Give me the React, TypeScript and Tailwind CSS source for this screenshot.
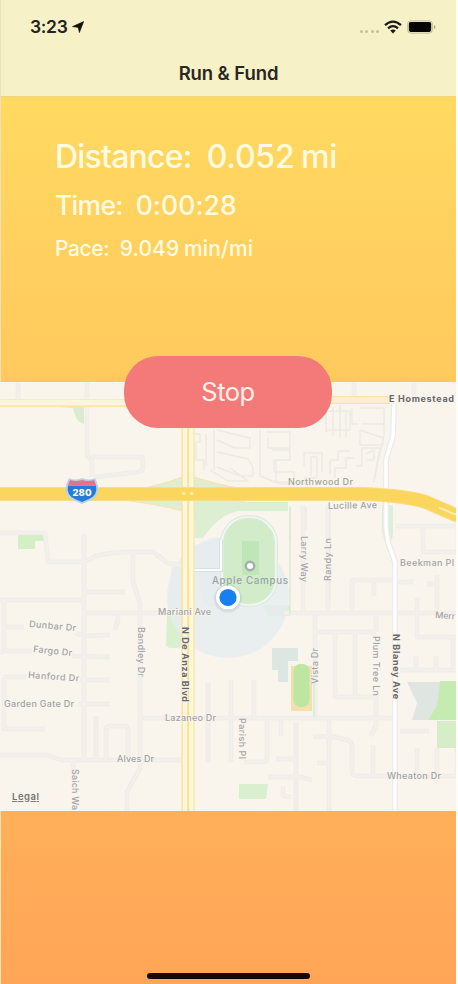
const FONT = "font-['Inter','Liberation_Sans',sans-serif]";

// Residential streets, as centre lines.
const STREETS = [
  "M18 382V400",
  "M87 382V455L92 461V477",
  "M92 457H140Q143 457 143 460V468Q143 471 138 472L95 477",
  "M0 533H45L48 562H84L96 556Q110 552 135 552H153L168 563L182 566",
  "M84 534V757",
  "M0 600H84",
  "M84 592H125",
  "M84 613H182",
  "M118 613V620L115 630",
  "M133 553V582L140 603V768L127 792V811",
  "M4 600V651L0 653",
  "M4 627H24M76 633L84 636L110 635",
  "M4 651H32M72 656L110 657",
  "M4 677V729H45",
  "M4 677H26M80 680H110",
  "M78 704H110",
  "M0 755H48L60 760H182",
  "M73 760V775",
  "M96 716V757",
  "M106 757V730Q106 726 110 726H124Q128 726 128 731V757",
  "M140 718H182",
  "M208 682V762",
  "M194 718H396",
  "M231 680V762",
  "M254 680V718",
  "M267 720V758Q267 762 262 762H244",
  "M281 720V736",
  "M296 722V811",
  "M276 759H296M268 777L300 777L312 780",
  "M283 786V796L291 797",
  "M329 718V811",
  "M313 737L329 736L348 740Q352 742 352 748V772Q353 776 358 776H458",
  "M317 763H329",
  "M373 745V776",
  "M376 690V725L371 736",
  "M303 505V613M328 505V613",
  "M284 613H458",
  "M352 613V580H395",
  "M374 580V596M376 613V632",
  "M315 613V718",
  "M315 632H376",
  "M335 632V697H376",
  "M355 632V697",
  "M396 582H413M427 584H434",
  "M437 575V613",
  "M417 598V637H458",
  "M453 637V667",
  "M400 670H458M416 656V670M436 656V670",
  "M400 731H429",
  "M417 748V776M437 748V776M457 748V776",
  "M396 526H458V552H423V528",
  "M354 382V398M414 382V396",
];

// Small lanes in the dense housing blocks north of the freeway.
const LANES = [
  "M194 434H200V442H196V460H204V470M214 430V470M206 434V465",
  "M217 430L250 438V448H235L217 440M217 452L248 459L253 467V476H240L217 467",
  "M230 468L248 481H228L210 470",
  "M260 430V476L280 484H305M266 432H290V448H268V438",
  "M272 450H290V460H274V472H294V482H276V460",
  "M304 466V453H322V472M311 476V457H317V478H304",
  "M330 474V460H338V451H350M335 478V468H346V458H354",
  "M356 466H362V448H380L374 482M367 460H374V450L366 454",
  "M326 411V432M333 407V436M340 405V438M346 410V438M326 411H350V430H326",
  "M352 407V424H358M360 408H384V424H362M360 430L383 438V445H360V430",
  "M384 410V435L374 480",
  "M290 506V540M306 507V530M330 508V600",
];

const LABELS: { text: string; x: number; y: number; w: number; angle?: number; bold?: boolean }[] = [
  { text: "Northwood Dr", x: 288, y: 485, w: 65 },
  { text: "Lucille Ave", x: 328, y: 509, w: 49, angle: -1 },
  { text: "Beekman Pl", x: 400, y: 566, w: 54 },
  { text: "Mariani Ave", x: 158, y: 615, w: 53 },
  { text: "Dunbar Dr", x: 29, y: 627, w: 47, angle: 5 },
  { text: "Fargo Dr", x: 33, y: 652, w: 39, angle: 6 },
  { text: "Hanford Dr", x: 28, y: 678, w: 51, angle: 4 },
  { text: "Garden Gate Dr", x: 4, y: 707, w: 70 },
  { text: "Lazaneo Dr", x: 165, y: 721, w: 51 },
  { text: "Alves Dr", x: 117, y: 762, w: 37 },
  { text: "Wheaton Dr", x: 387, y: 779, w: 54 },
  { text: "Merr", x: 435, y: 618, w: 20, angle: 4 },
  { text: "Larry Way", x: 301, y: 536, w: 46, angle: 90 },
  { text: "Randy Ln", x: 331, y: 581, w: 43, angle: -90 },
  { text: "Bandley Dr", x: 138, y: 627, w: 50, angle: 90 },
  { text: "Vista Dr", x: 318, y: 684, w: 36, angle: -90 },
  { text: "Plum Tree Ln", x: 373, y: 636, w: 60, angle: 90 },
  { text: "Parish Pl", x: 239, y: 718, w: 41, angle: 90 },
  { text: "Saich Wa", x: 72, y: 769, w: 41, angle: 90 },
  { text: "N De Anza Blvd", x: 182, y: 627, w: 75, angle: 90, bold: true },
  { text: "N Blaney Ave", x: 393, y: 634, w: 65, angle: 90, bold: true },
  { text: "E Homestead", x: 389, y: 402, w: 65, bold: true },
];

function RunMap() {
  return (
    <svg viewBox="0 382 456 429" className="block h-[429px] w-[456px] bg-[#f9f5ed]" role="img">
      {/* parks and campus grounds */}
      <path d="M58 407H84V424Q75 422 73 408Z" fill="#d9ecd0" />
      <path d="M18 534H45V541H35V549H18Z" fill="#d3efc5" />
      <path d="M140 489Q165 484 188 475Q220 486 246 489V501Q210 503 188 512Q155 504 130 501Z" fill="#dfedd1" stroke="#fbe0b5" strokeWidth="1.2" />
      <path d="M194 502H288V511H240Q220 513 203 538H195Z" fill="#dcefd3" />
      <path d="M195 545L222 538V606H205L195 568Z" fill="#e9eeee" />
      <path d="M172 567H182V648H168V600Z" fill="#eaeced" />
      <path d="M167 613H181V646Q174 650 166 646Z" fill="#d9efcd" />
      <path d="M262 605H290V616H268Z" fill="#dcefd3" />
      <path d="M272 648H298V661H288V682H278V670H272Z" fill="#dbe7e0" />
      <path d="M407 682H442V720H412L417 703Z" fill="#dfe6e2" />
      <path d="M440 681H458V720H428L437 706Z" fill="#c5ebb0" />
      <path d="M437 721H458V748H437Z" fill="#d6eec8" />
      <path d="M239 784H268L266 799H239Z" fill="#d9efce" />
      <path d="M382 505H393V535L388 552L382 532Z" fill="#dfeeda" />
      <circle cx="228" cy="597" r="61" fill="#e6ecee" fillOpacity=".85" />

      <g fill="none" strokeLinejoin="round">
        <g stroke="#eeebe6" strokeWidth="4.6">
          {STREETS.map((d) => <path key={d} d={d} />)}
        </g>
        <g stroke="#f3efeb" strokeWidth="3">
          {STREETS.map((d) => <path key={d} d={d} />)}
        </g>
        <g stroke="#edeae5" strokeWidth="1.4">
          {LANES.map((d) => <path key={d} d={d} />)}
        </g>
      </g>

      {/* campus ring */}
      <rect x="222" y="517" width="54" height="88" rx="26" fill="#d2ecca" stroke="#dcebdd" strokeWidth="4" />
      <rect x="222" y="517" width="54" height="88" rx="26" fill="none" stroke="#f2f9f0" strokeWidth="1.5" />
      <path d="M242 541H259V575H242Z" fill="#bfe6b9" />
      <path d="M194 570H221V540" fill="none" stroke="#d9e1e4" strokeWidth="4" />
      <path d="M194 570H221V540" fill="none" stroke="#fbfcfc" strokeWidth="2" />
      <path d="M290 507V614" stroke="#d5ead0" strokeWidth="1.3" />
      <path d="M291 666H312V711H291Z" fill="#f4dfae" />
      <rect x="293.5" y="664" width="16" height="43" rx="7" fill="#bce6a2" />
      <path d="M314 660V717" stroke="#d6ecd0" strokeWidth="1.3" />

      {/* arterials */}
      <g fill="none">
        <path d="M0 403H130M320 400H390" stroke="#fbe3b0" strokeWidth="8" />
        <path d="M0 402.5H130" stroke="#fef6dc" strokeWidth="5.4" />
        <path d="M320 400H390" stroke="#fdeed2" strokeWidth="5.4" />
        <path d="M394 404L393 436L386 460V528L388 542L395 562V811" stroke="#ebebe8" strokeWidth="6" />
        <path d="M394 404L393 436L386 460V528L388 542L395 562V811" stroke="#fff" strokeWidth="3.5" />
        <path d="M188 420V811" stroke="#f9e09a" strokeWidth="13" />
        <path d="M185 420V811M191.3 420V811" stroke="#fff7d8" strokeWidth="4.4" />
        <path d="M0 494H360Q403 495 426 502L458 516" stroke="#f8dc86" strokeWidth="14" />
        <path d="M0 494H360Q403 495 426 502L458 516" stroke="#fad75c" strokeWidth="12" />
        <path d="M439 507.5L458 515.5" stroke="#fdecc0" strokeWidth="1.8" />
        <path d="M182 493.5H185.5M190 493.5H193.5" stroke="#fff1ae" strokeWidth="2.5" />
      </g>

      {/* interstate shield */}
      <path d="M69 478Q75 481 82 478Q89 481 95 478Q104 495 89 501L82 504L75 501Q60 495 69 478Z" fill="#b7d2ec" />
      <path d="M70 480Q76 482 82 480Q88 482 94 480L96 485H68Z" fill="#e07488" />
      <path d="M68 485.5H96Q98 495 89 499L82 502L75 499Q66 495 68 485.5Z" fill="#287ad7" />
      <text x="82" y="495.5" textAnchor="middle" fontSize="9.5" fontWeight="800" fill="#fff" textLength="19" lengthAdjust="spacingAndGlyphs">280</text>

      <g stroke="#f9f5ed" strokeWidth="1.2" paintOrder="stroke" strokeLinejoin="round">
        {LABELS.map((l) => (
          <text
            key={l.text}
            x={l.x}
            y={l.y}
            fontSize={9}
            fontWeight={l.bold ? 700 : 500}
            fill={l.bold ? "#69696a" : "#a3a3a6"}
            textLength={l.w}
            transform={l.angle ? `rotate(${l.angle} ${l.x} ${l.y})` : undefined}
          >
            {l.text}
          </text>
        ))}
      </g>
      <text x="212" y="584" fontSize="9.8" fontWeight="500" fill="#98a3a9" textLength="76">Apple Campus</text>
      <circle cx="250" cy="566" r="4.2" fill="#fff" stroke="#a3aeb1" strokeWidth="2.4" />

      {/* current position */}
      <circle cx="228" cy="598.5" r="14.5" fill="#7a8a94" fillOpacity=".1" />
      <circle cx="228" cy="598" r="13" fill="#7a8a94" fillOpacity=".13" />
      <circle cx="228" cy="597.5" r="12" fill="#fff" />
      <circle cx="228" cy="597.5" r="8.6" fill="#187fee" />

      <text x="12" y="800" fontSize="9.5" fontWeight="600" fill="#777571" textLength="27" textDecoration="underline">Legal</text>
    </svg>
  );
}

function StatusBar() {
  return (
    <div className="flex h-[54px] items-center justify-between pl-[29px] pr-[20px]">
      <div className="flex items-center gap-[4px] text-[17.5px] font-semibold tracking-[-0.3px] text-[#26251f]">
        <span>3:23</span>
        <svg viewBox="0 0 12 12" className="size-[12px]">
          <path d="M11.7.5L7.4 11.6L6.2 6.4L.5 5.6Z" fill="#11110e" stroke="#11110e" strokeWidth=".6" />
        </svg>
      </div>
      <div className="flex items-center gap-[5px]">
        <div className="flex gap-[2.5px] pt-[8px]">
          <i className="size-[3px] rounded-full bg-[#c5c0a3]" />
          <i className="size-[3px] rounded-full bg-[#c5c0a3]" />
          <i className="size-[3px] rounded-full bg-[#c5c0a3]" />
          <i className="size-[3px] rounded-full bg-[#c5c0a3]" />
        </div>
        <svg viewBox="0 0 18 14" className="h-[14px] w-[18px]" fill="none" stroke="#191915" strokeWidth="2.3">
          <path d="M1 5.2Q9-2 17 5.2" />
          <path d="M4 8.3Q9 4 14 8.3" />
          <path d="M9 13.4L6.2 10.5Q9 8.5 11.8 10.5Z" fill="#191915" stroke="none" />
        </svg>
        <svg viewBox="0 0 29 14" className="h-[14px] w-[29px]">
          <rect x=".6" y=".9" width="24.8" height="12.2" rx="3.2" fill="none" stroke="#c2bd9f" />
          <rect x="1.8" y="2.1" width="22.4" height="9.8" rx="1.8" fill="#050505" />
          <path d="M27 5V9Q28.5 8.5 28.5 7T27 5Z" fill="#a8a48c" />
        </svg>
      </div>
    </div>
  );
}

export default function App() {
  return (
    <div className={`h-[984px] w-[458px] overflow-hidden bg-[#fefdf8] ${FONT}`}>
      <main className="flex h-full w-[456px] flex-col border-l border-[#e9e2ba] bg-linear-to-b from-[#ffdf62] to-[#ffa557]">
        <header className="h-[97px] shrink-0 border-b border-[#ecd57c] bg-[#f7f1c8]">
          <StatusBar />
          <h1 className="pt-[5px] text-center text-[18.5px] leading-[28px] font-semibold tracking-[-0.1px] text-[#29271f]">Run &amp; Fund</h1>
        </header>
        <section className="flex h-[285px] shrink-0 flex-col pt-[39px] pl-[54px] font-[450] text-[#fffbe1]">
          <p className="flex gap-[15px] text-[32px] leading-[42px]">
            <span className="tracking-[-0.8px]">Distance:</span>
            <span className="tracking-[-0.2px] [word-spacing:-1.8px]">0.052 mi</span>
          </p>
          <p className="mt-[9px] flex gap-[13px] text-[26.5px] leading-[36px]">
            <span className="tracking-[-0.7px]">Time:</span>
            <span className="tracking-[0.1px]">0:00:28</span>
          </p>
          <p className="mt-[12px] flex gap-[10.5px] text-[21px] leading-[28px]">
            <span className="tracking-[-0.4px]">Pace:</span>
            <span className="tracking-[0.15px] [word-spacing:-1.2px]">9.049 min/mi</span>
          </p>
        </section>
        <section className="relative -ml-px h-[429px] w-[456px] shrink-0">
          <RunMap />
          <button className="absolute -top-[26px] left-[124px] h-[72px] w-[208px] rounded-[34px] bg-[#f37a78] text-[25.5px] tracking-[-0.5px] text-[#fff0e9]">Stop</button>
        </section>
        <footer className="flex flex-1 items-end justify-center pb-[5px]">
          <div className="h-[6px] w-[163px] rounded-full bg-[#160703]" />
        </footer>
      </main>
    </div>
  );
}
